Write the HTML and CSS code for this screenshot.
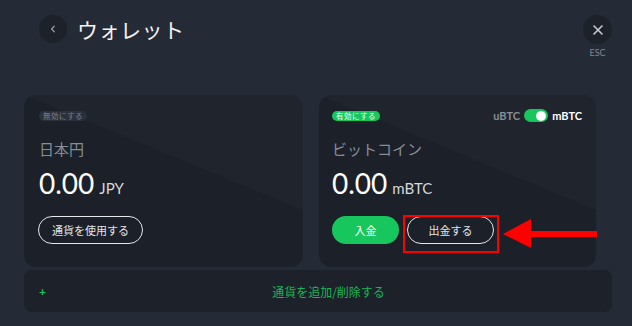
FILE: index.html
```html
<!DOCTYPE html>
<html lang="ja">
<head>
<meta charset="utf-8">
<title>ウォレット</title>
<link rel="stylesheet" href="styles.css">
</head>
<body>
<div class="page">
  <header class="header">
    <button class="back-btn" aria-label="戻る">
      <svg width="10" height="10" viewBox="0 0 10 10"><path d="M6.2 2.2 L3.6 5 L6.2 7.8" fill="none" stroke="#8b929c" stroke-width="1.4" stroke-linecap="round" stroke-linejoin="round"/></svg>
    </button>
    <h1 class="title">ウォレット</h1>
    <div class="close">
      <button class="close-btn" aria-label="閉じる">
        <svg width="12" height="12" viewBox="0 0 12 12"><path d="M2 2 L10 10 M10 2 L2 10" stroke="#c9ccd1" stroke-width="1.6" stroke-linecap="round"/></svg>
      </button>
      <span class="esc">ESC</span>
    </div>
  </header>

  <div class="cards">
    <section class="card card-jpy">
      <div class="card-top">
        <span class="badge badge-off">無効にする</span>
      </div>
      <div class="name">日本円</div>
      <div class="amount"><span class="num">0.00</span><span class="unit">JPY</span></div>
      <div class="actions">
        <button class="btn btn-outline btn-use">通貨を使用する</button>
      </div>
    </section>

    <section class="card card-btc">
      <div class="card-top">
        <span class="badge badge-on">有効にする</span>
        <div class="unit-toggle">
          <span class="u-off">uBTC</span>
          <span class="switch"><span class="knob"></span></span>
          <span class="u-on">mBTC</span>
        </div>
      </div>
      <div class="name">ビットコイン</div>
      <div class="amount"><span class="num">0.00</span><span class="unit">mBTC</span></div>
      <div class="actions">
        <button class="btn btn-green">入金</button>
        <button class="btn btn-outline btn-withdraw">出金する</button>
      </div>
    </section>
  </div>

  <div class="addbar">
    <span class="plus">+</span>
    <span class="add-text">通貨を追加/削除する</span>
  </div>

  <div class="highlight"></div>
  <svg class="arrow" width="96" height="32" viewBox="0 0 96 32">
    <polygon points="0,15 28,0 28,12 94,12 94,18 28,18 28,29" fill="#ff0000"/>
  </svg>
</div>
</body>
</html>
```

FILE: styles.css
```css
* { box-sizing: border-box; }
html, body { margin: 0; padding: 0; }
body {
  background: #252b36;
  font-family: "Lato", "Noto Sans CJK JP", sans-serif;
  color: #ffffff;
  width: 632px;
  height: 326px;
  overflow: hidden;
}
button { font-family: inherit; cursor: pointer; }

.page { position: relative; width: 632px; height: 326px; }

.header {
  height: 95px;
  display: flex;
  align-items: flex-start;
  padding: 15px 20px 0 39px;
}
.back-btn {
  width: 28px; height: 28px;
  border-radius: 50%;
  border: none;
  background: #1d222a;
  display: flex; align-items: center; justify-content: center;
  padding: 0;
}
.title {
  margin: 0 0 0 10px;
  font-family: "Noto Sans CJK JP", sans-serif;
  font-weight: 400;
  font-size: 21px;
  line-height: 28px;
  letter-spacing: 0.5px;
  color: #f2f3f5;
}
.close {
  margin-left: auto;
  display: flex;
  flex-direction: column;
  align-items: center;
  width: 29px;
}
.close-btn {
  width: 29px; height: 29px;
  border-radius: 50%;
  border: none;
  background: #1d222a;
  display: flex; align-items: center; justify-content: center;
  padding: 0;
}
.esc {
  margin-top: 4px;
  font-size: 9px;
  line-height: 10px;
  color: #7f8791;
  font-family: "Lato", sans-serif;
}

.cards {
  display: grid;
  grid-template-columns: 279px 277px;
  column-gap: 16px;
  padding-left: 24px;
  height: 172px;
}
.card {
  border-radius: 12px;
  background: linear-gradient(22.5deg, #1b2029 0%, #1b2029 60%, #1f242d 60%, #1f242d 100%);
  padding: 14px 15px 0 15px;
  display: flex;
  flex-direction: column;
}
.card-btc { padding-left: 13px; }
.card-top {
  display: flex;
  align-items: center;
  justify-content: space-between;
  height: 13px;
}
.badge {
  font-family: "Noto Sans CJK JP", sans-serif;
  font-size: 7.5px;
  line-height: 10px;
  height: 10px;
  padding: 0 4px;
  border-radius: 5px;
  letter-spacing: 0.5px;
}
.badge-off { background: #2b313c; color: #7a818c; }
.badge-on { background: #17c75d; color: #eafff1; }

.unit-toggle {
  display: flex;
  align-items: center;
  gap: 4px;
  margin-right: -1px;
  font-size: 11px;
  font-weight: 700;
}
.u-off { color: #878e98; }
.u-on { color: #ffffff; }
.switch {
  width: 24px; height: 13px;
  border-radius: 7px;
  background: #17c75d;
  position: relative;
  display: block;
}
.knob {
  position: absolute;
  right: 2px; top: 1.5px;
  width: 10px; height: 10px;
  border-radius: 50%;
  background: #ffffff;
}

.name {
  margin-top: 17px;
  font-family: "Noto Sans CJK JP", sans-serif;
  font-size: 15px;
  line-height: 20px;
  color: #878d97;
}
.amount {
  margin-top: 8px;
  display: flex;
  align-items: baseline;
  height: 32px;
}
.num {
  font-size: 28px;
  line-height: 32px;
  color: #ffffff;
  font-weight: 400;
}
.unit {
  margin-left: 5px;
  font-size: 15px;
  color: #d5d8dc;
}
.actions {
  margin-top: 17px;
  display: flex;
  gap: 8px;
}
.btn {
  height: 28px;
  border-radius: 14px;
  font-family: "Noto Sans CJK JP", sans-serif;
  font-size: 11px;
  padding: 0;
  display: flex; align-items: center; justify-content: center;
}
.btn-outline {
  background: transparent;
  border: 1px solid #e6e8eb;
  color: #e3e5e8;
}
.btn-use { width: 105px; margin-left: -1px; }
.btn-green {
  width: 67px;
  border: none;
  background: #17c75d;
  color: #ffffff;
}
.btn-withdraw { width: 87px; }

.addbar {
  margin: 3px 0 0 24px;
  width: 588px;
  height: 42px;
  border-radius: 8px;
  background: #1c212a;
  display: flex;
  align-items: center;
  padding-left: 15px;
}
.plus {
  color: #17c75d;
  font-size: 12px;
  font-weight: 700;
  width: 6px;
}
.add-text {
  flex: 1;
  text-align: center;
  font-family: "Noto Sans CJK JP", sans-serif;
  font-size: 12px;
  color: #1db559;
}

.highlight {
  position: absolute;
  left: 403px; top: 215px;
  width: 96px; height: 38px;
  border: 2px solid #ff0000;
}
.arrow {
  position: absolute;
  left: 503px; top: 219px;
}
```
